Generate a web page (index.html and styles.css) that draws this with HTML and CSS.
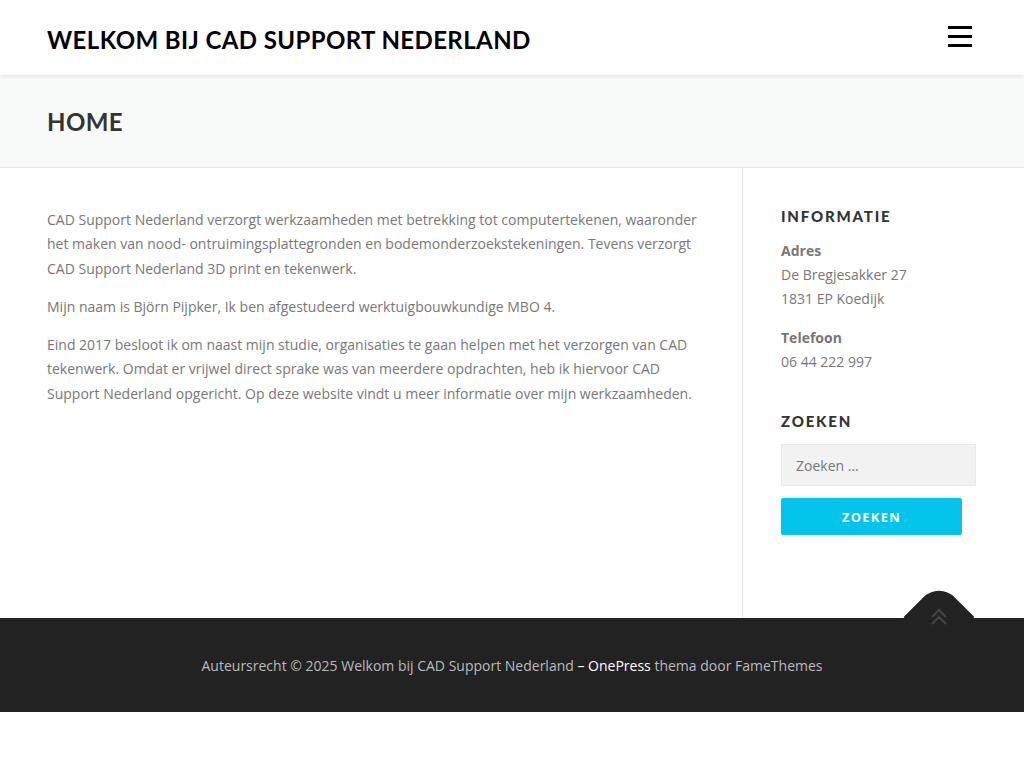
FILE: index.html
```html
<!DOCTYPE html>
<html lang="nl">
<head>
<meta charset="utf-8">
<title>Welkom bij CAD Support Nederland</title>
<link rel="stylesheet" href="styles.css">
</head>
<body>
<header class="site-header">
  <div class="container header-inner">
    <div class="site-title">WELKOM BIJ CAD SUPPORT NEDERLAND</div>
    <button class="nav-toggle" aria-label="Menu"><span></span><span></span><span></span></button>
  </div>
</header>
<div class="page-header">
  <div class="container"><h1 class="page-title">HOME</h1></div>
</div>
<div class="site-content">
  <div class="container content-grid">
    <main class="primary">
      <p>CAD Support Nederland verzorgt werkzaamheden met betrekking tot computertekenen, waaronder het maken van nood- ontruimingsplattegronden en bodemonderzoekstekeningen. Tevens verzorgt CAD Support Nederland 3D print en tekenwerk.</p>
      <p>Mijn naam is Björn Pijpker, Ik ben afgestudeerd werktuigbouwkundige MBO 4.</p>
      <p>Eind 2017 besloot ik om naast mijn studie, organisaties te gaan helpen met het verzorgen van CAD tekenwerk. Omdat er vrijwel direct sprake was van meerdere opdrachten, heb ik hiervoor CAD Support Nederland opgericht. Op deze website vindt u meer informatie over mijn werkzaamheden.</p>
    </main>
    <aside class="secondary">
      <section class="widget">
        <h2 class="widget-title">INFORMATIE</h2>
        <p><strong>Adres</strong><br>De Bregjesakker 27<br>1831 EP Koedijk</p>
        <p><strong>Telefoon</strong><br>06 44 222 997</p>
      </section>
      <section class="widget widget-search">
        <h2 class="widget-title">ZOEKEN</h2>
        <form class="search-form">
          <input class="search-field" type="search" placeholder="Zoeken …">
          <button class="search-submit" type="button">ZOEKEN</button>
        </form>
      </section>
    </aside>
  </div>
</div>
<footer class="site-footer">
  <div class="btt">
    <svg class="btt-icon" width="18" height="18" viewBox="0 0 18 18" aria-hidden="true">
      <path d="M2 9 L9 2 L16 9 M2 16 L9 9 L16 16" fill="none" stroke="#444" stroke-width="2.4"/>
    </svg>
  </div>
  <div class="container footer-info">Auteursrecht © 2025 Welkom bij CAD Support Nederland <span class="hl">– OnePress</span> thema door FameThemes</div>
</footer>
</body>
</html>
```
FILE: styles.css
```css
* { box-sizing: border-box; }
html, body { margin: 0; padding: 0; }
body {
  font-family: "Open Sans", "Liberation Sans", sans-serif;
  font-size: 14px;
  color: #777;
  background: #fff;
}
.container {
  width: 960px;
  margin: 0 auto;
  padding: 0 15px;
}
.site-header {
  background: #fff;
  height: 75px;
  position: relative;
  z-index: 2;
  box-shadow: 0 1px 4px rgba(0,0,0,0.10);
}
.header-inner {
  display: flex;
  align-items: center;
  justify-content: space-between;
  height: 75px;
}
.site-title {
  font-family: "Lato", "Liberation Sans", sans-serif;
  font-weight: 700;
  font-size: 24px;
  letter-spacing: 0.4px;
  color: #000;
  margin-top: 4px;
}
.nav-toggle {
  background: none;
  border: 0;
  padding: 0;
  width: 24px;
  height: 21px;
  display: flex;
  flex-direction: column;
  justify-content: space-between;
  margin-right: 5px;
  margin-top: -2px;
}
.nav-toggle span {
  display: block;
  height: 3px;
  background: #000;
}
.page-header {
  background: #f8f9f9;
  border-bottom: 1px solid #e9e9e9;
  height: 93px;
  display: flex;
  align-items: center;
}
.page-title {
  margin: 0;
  font-family: "Lato", "Liberation Sans", sans-serif;
  font-weight: 700;
  font-size: 24px;
  letter-spacing: 0.4px;
  color: #333;
  padding-top: 1px;
}
.site-content { height: 450px; }
.content-grid {
  display: grid;
  grid-template-columns: 695px 235px;
  height: 100%;
}
.primary {
  padding: 40px 30px 0 0;
}
.primary p {
  margin: 0 0 14px;
  line-height: 24.3px;
}
.secondary {
  border-left: 1px solid #e9e9e9;
  padding: 39px 0 0 38px;
}
.widget { margin-bottom: 38px; }
.widget p { margin: 0 0 15px; line-height: 24px; }
.widget strong { font-weight: 700; }
.widget-title {
  font-family: "Lato", "Liberation Sans", sans-serif;
  font-weight: 900;
  font-size: 15px;
  letter-spacing: 1.8px;
  color: #333;
  margin: 0 0 14px;
}
.search-form { display: flex; flex-direction: column; align-items: flex-start; }
.search-field {
  width: 195px;
  height: 42px;
  background: #f2f2f2;
  border: 1px solid #e9e9e9;
  padding: 0 14px;
  font-family: "Open Sans", sans-serif;
  font-size: 14px;
  color: #777;
  margin-bottom: 12px;
}
.search-field::placeholder { color: #777; }
.search-submit {
  width: 181px;
  height: 37px;
  background: #03c4eb;
  border: 0;
  border-radius: 2px;
  color: #fff;
  font-family: "Open Sans", sans-serif;
  font-weight: 700;
  font-size: 13px;
  letter-spacing: 1.2px;
}
.site-footer {
  background: #222;
  height: 94px;
  position: relative;
  display: flex;
  align-items: center;
}
.footer-info {
  text-align: center;
  color: #bbb;
  font-size: 14px;
  padding-top: 1px;
}
.footer-info .hl { color: #fff; }
.btt {
  position: absolute;
  left: 914px;
  top: -26px;
  width: 50px;
  height: 50px;
  background: #222;
  border-radius: 22px 0 0 0;
  transform: rotate(45deg);
  transform-origin: center;
}
.btt-icon {
  position: absolute;
  left: 16px;
  top: 16px;
  transform: rotate(-45deg);
}
```
